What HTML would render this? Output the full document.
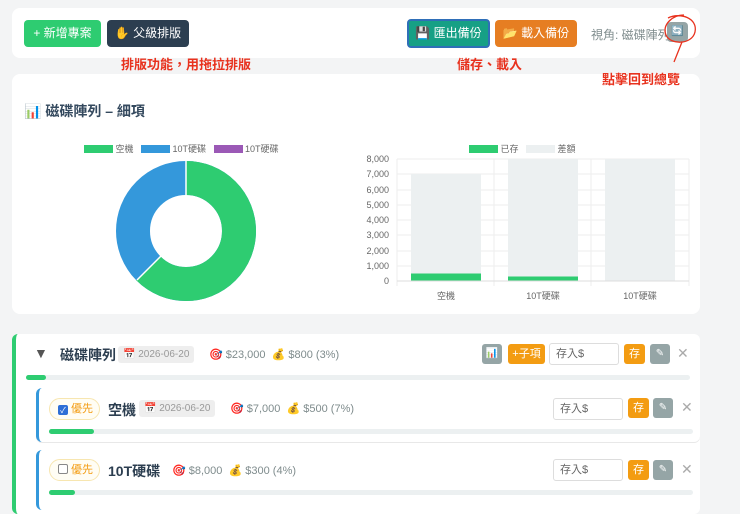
<!DOCTYPE html>
<html><head><meta charset="utf-8"><style>
*{box-sizing:border-box;margin:0;padding:0}
body{width:740px;height:499px;overflow:hidden;background:#f3f4f5;font-family:"Liberation Sans","Noto Sans CJK TC",sans-serif;position:relative;color:#2c3e50}
.card{position:absolute;background:#fff;border-radius:8px}
.btn{position:absolute;height:27px;border-radius:4px;color:#fff;font-size:12px;line-height:27px;text-align:center}
.red{position:absolute;color:#e8321e;font-weight:bold;font-size:13px;white-space:nowrap;z-index:10}
.abs{position:absolute;white-space:nowrap}
.gray{color:#7f8c8d;font-size:11px}
.date{position:absolute;background:#eee;color:#999;font-size:10px;height:17px;line-height:17px;padding:0 5px;border-radius:3px}
.inp{position:absolute;width:70px;height:22px;border:1px solid #ddd;border-radius:3px;font-size:11px;color:#666;line-height:20px;padding-left:6px;background:#fff}
.sb{position:absolute;width:21px;height:20px;border-radius:3px;background:#f39c12;color:#fff;font-size:11px;line-height:20px;text-align:center}
.eb{position:absolute;width:20px;height:20px;border-radius:3px;background:#95a5a6;color:#fff;font-size:10px;line-height:20px;text-align:center}
.x{position:absolute;color:#aaa;font-size:14px}
.bar{position:absolute;height:5px;background:#ecf0f1;border-radius:3px}
.bar i{display:block;height:5px;background:#2ecc71;border-radius:3px}
.pri{position:absolute;height:22px;border:1px solid #f7e6b0;border-radius:11px;background:#fffdf4;color:#f39c12;font-size:11px;line-height:20px;padding:0 6px 0 8px}
.cb{display:inline-block;width:10px;height:10px;border:1px solid #888;border-radius:2px;vertical-align:-1px;margin-right:3px;background:#fff}
</style></head><body>
<div class="card" style="left:12px;top:8px;width:688px;height:50px"></div>
<div class="btn" style="left:24px;top:20px;width:77px;background:#2ecc71">+ 新增專案</div>
<div class="btn" style="left:107px;top:20px;width:82px;background:#2c3e50">✋ 父級排版</div>
<div class="btn" style="left:407px;top:19px;width:83px;height:29px;background:#16a085;border:2px solid #2f6fb8;line-height:25px">💾 匯出備份</div>
<div class="btn" style="left:495px;top:20px;width:82px;background:#e67e22">📂 載入備份</div>
<div class="abs gray" style="left:591px;top:26px;font-size:12px">視角: 磁碟陣列</div>
<div class="btn" style="left:667px;top:22px;width:21px;height:20px;line-height:20px;background:#95a5a6;font-size:10px">🔄</div>

<div class="card" style="left:12px;top:74px;width:688px;height:240px"></div>
<div class="abs" style="left:24px;top:101px;font-size:14px;font-weight:bold;color:#34495e">📊 磁碟陣列 – 細項</div>
<div class="abs" style="left:84px;top:142px;font-size:9px;color:#666">
<span style="display:inline-block;width:29px;height:8px;background:#2ecc71;vertical-align:-1px"></span> 空機 &nbsp;&nbsp;<span style="display:inline-block;width:29px;height:8px;background:#3498db;vertical-align:-1px"></span> 10T硬碟 &nbsp;&nbsp;<span style="display:inline-block;width:29px;height:8px;background:#9b59b6;vertical-align:-1px"></span> 10T硬碟</div>
<svg class="abs" style="left:116px;top:161px" width="140" height="140"><g transform="rotate(-90 70 70)"><circle cx="70" cy="70" r="53" fill="none" stroke="#3498db" stroke-width="34"/><circle cx="70" cy="70" r="53" fill="none" stroke="#2ecc71" stroke-width="34" stroke-dasharray="208.2 400"/></g><line x1="70" y1="0" x2="70" y2="36" stroke="#fff" stroke-width="1.5"/><line x1="21" y1="119" x2="45" y2="95" stroke="#fff" stroke-width="1.5"/></svg>
<div class="abs" style="left:469px;top:142px;font-size:9px;color:#666"><span style="display:inline-block;width:29px;height:8px;background:#2ecc71;vertical-align:-1px"></span> 已存 &nbsp;&nbsp;<span style="display:inline-block;width:29px;height:8px;background:#ecf0f1;vertical-align:-1px"></span> 差額</div>
<svg class="abs" style="left:360px;top:150px" width="340" height="160" font-family="Liberation Sans,Noto Sans CJK TC,sans-serif" font-size="9" fill="#666">
<g stroke="#eee" stroke-width="1">
<line x1="37" y1="9" x2="329" y2="9"/><line x1="37" y1="24" x2="329" y2="24"/><line x1="37" y1="40" x2="329" y2="40"/><line x1="37" y1="55" x2="329" y2="55"/><line x1="37" y1="70" x2="329" y2="70"/><line x1="37" y1="85" x2="329" y2="85"/><line x1="37" y1="101" x2="329" y2="101"/><line x1="37" y1="116" x2="329" y2="116"/>
<line x1="37" y1="9" x2="37" y2="136"/><line x1="134" y1="9" x2="134" y2="136"/><line x1="231" y1="9" x2="231" y2="136"/><line x1="329" y1="9" x2="329" y2="136"/></g>
<rect x="51" y="24" width="70" height="107" fill="#ecf0f1"/><rect x="51" y="123.5" width="70" height="7.5" fill="#2ecc71"/>
<rect x="148" y="9" width="70" height="122" fill="#ecf0f1"/><rect x="148" y="126.5" width="70" height="4.5" fill="#2ecc71"/>
<rect x="245" y="9" width="70" height="122" fill="#ecf0f1"/>
<line x1="37" y1="131" x2="329" y2="131" stroke="#ddd"/>
<g text-anchor="end"><text x="29" y="12">8,000</text><text x="29" y="27">7,000</text><text x="29" y="43">6,000</text><text x="29" y="58">5,000</text><text x="29" y="73">4,000</text><text x="29" y="88">3,000</text><text x="29" y="104">2,000</text><text x="29" y="119">1,000</text><text x="29" y="134">0</text></g>
<g text-anchor="middle"><text x="86" y="149">空機</text><text x="183" y="149">10T硬碟</text><text x="280" y="149">10T硬碟</text></g>
</svg>

<div class="card" style="left:12px;top:334px;width:688px;height:180px;border-left:4px solid #2ecc71;border-radius:6px"></div>
<div class="abs" style="left:34px;top:345px;font-size:14px;color:#555">▼</div>
<div class="abs" style="left:60px;top:345px;font-size:14px;font-weight:bold">磁碟陣列</div>
<div class="date" style="left:118px;top:346px">📅 2026-06-20</div>
<div class="abs gray" style="left:209px;top:348px">🎯 $23,000 &nbsp;💰 $800 (3%)</div>
<div class="eb" style="left:482px;top:344px">📊</div>
<div class="sb" style="left:508px;top:344px;width:37px">+子項</div>
<div class="inp" style="left:549px;top:343px">存入$</div>
<div class="sb" style="left:624px;top:344px">存</div>
<div class="eb" style="left:650px;top:344px">✎</div>
<div class="x" style="left:677px;top:345px">✕</div>
<div class="bar" style="left:26px;top:375px;width:664px"><i style="width:20px"></i></div>

<div class="card" style="left:36px;top:388px;width:664px;height:54px;border-left:3px solid #3498db;border-radius:6px;box-shadow:0 1px 0 #e8e8e8"></div>
<div class="pri" style="left:49px;top:398px"><span class="cb" style="background:#2f6fd6;border-color:#2f6fd6;color:#fff;font-size:8px;line-height:9px;text-align:center">✓</span>優先</div>
<div class="abs" style="left:108px;top:400px;font-size:14px;font-weight:bold">空機</div>
<div class="date" style="left:139px;top:400px">📅 2026-06-20</div>
<div class="abs gray" style="left:230px;top:402px">🎯 $7,000 &nbsp;💰 $500 (7%)</div>
<div class="inp" style="left:553px;top:398px">存入$</div>
<div class="sb" style="left:628px;top:398px">存</div>
<div class="eb" style="left:653px;top:398px">✎</div>
<div class="x" style="left:681px;top:399px">✕</div>
<div class="bar" style="left:49px;top:429px;width:644px"><i style="width:45px"></i></div>

<div class="card" style="left:36px;top:450px;width:664px;height:60px;border-left:3px solid #3498db;border-radius:6px"></div>
<div class="pri" style="left:49px;top:459px"><span class="cb"></span>優先</div>
<div class="abs" style="left:108px;top:461px;font-size:14px;font-weight:bold">10T硬碟</div>
<div class="abs gray" style="left:172px;top:464px">🎯 $8,000 &nbsp;💰 $300 (4%)</div>
<div class="inp" style="left:553px;top:459px">存入$</div>
<div class="sb" style="left:628px;top:460px">存</div>
<div class="eb" style="left:653px;top:460px">✎</div>
<div class="x" style="left:681px;top:461px">✕</div>
<div class="bar" style="left:49px;top:490px;width:644px"><i style="width:26px"></i></div>

<svg class="abs" style="left:650px;top:10px;z-index:10" width="80" height="60"><path d="M18 8 C30 2,48 8,45 22 C42 35,20 35,16 25 C12 15,22 5,34 5" fill="none" stroke="#e8321e" stroke-width="1.3"/><path d="M32 32 L24 52" stroke="#e8321e" stroke-width="1.3"/></svg>
<div class="red" style="left:121px;top:54px">排版功能，用拖拉排版</div>
<div class="red" style="left:457px;top:54px">儲存、載入</div>
<div class="red" style="left:602px;top:69px">點擊回到總覽</div>
</body></html>
